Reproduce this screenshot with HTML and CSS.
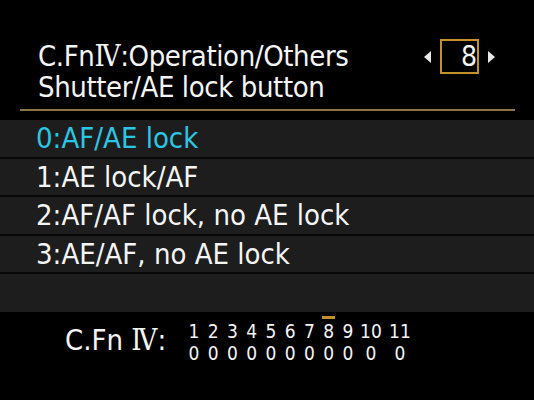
FILE: index.html
```html
<!DOCTYPE html>
<html>
  <head>
    <title>C.Fn IV: Operation/Others</title>
    <link rel="stylesheet" href="styles.css">
  </head>
  <body>
    <div id="screen">
      <div id="header">
        <div class="title_row">
          <p>C.Fn<span class="roman">Ⅳ</span>:Operation/Others</p>
          <div class="selector">
            <span class="arrow left"></span>
            <span class="num_box">8</span>
            <span class="arrow right"></span>
          </div>
        </div>
        <p>Shutter/AE lock button</p>
      </div>

      <div id="options">
        <div class="option selected">0:AF/AE lock</div>
        <div class="option">1:AE lock/AF</div>
        <div class="option">2:AF/AF lock, no AE lock</div>
        <div class="option">3:AE/AF, no AE lock</div>
        <div class="option"></div>
      </div>

      <div id="summary">
        <p class="label">C.Fn <span class="roman">Ⅳ</span>:</p>
        <div class="grid">
          <div class="col"><i></i><span>1</span><span>0</span></div>
          <div class="col"><i></i><span>2</span><span>0</span></div>
          <div class="col"><i></i><span>3</span><span>0</span></div>
          <div class="col"><i></i><span>4</span><span>0</span></div>
          <div class="col"><i></i><span>5</span><span>0</span></div>
          <div class="col"><i></i><span>6</span><span>0</span></div>
          <div class="col"><i></i><span>7</span><span>0</span></div>
          <div class="col current"><i></i><span>8</span><span>0</span></div>
          <div class="col"><i></i><span>9</span><span>0</span></div>
          <div class="col"><i></i><span>10</span><span>0</span></div>
          <div class="col"><i></i><span>11</span><span>0</span></div>
        </div>
      </div>
    </div>
  </body>
</html>
```

FILE: styles.css
```css
body {
  margin: 0;
  background: #000;
  color: #f4f4f4;
  font-family: "DejaVu Sans Condensed", "DejaVu Sans", sans-serif;
  font-stretch: condensed;
}

p { margin: 0; }

#screen {
  width: 534px;
  height: 400px;
  display: flex;
  flex-direction: column;
}

#header {
  margin: 0 19px 0 20px;
  padding: 41px 20px 6px 18px;
  border-bottom: 2px solid #8c7443;
  font-size: 29px;
  line-height: 31px;
  letter-spacing: -0.4px;
}

.title_row {
  height: 31px;
  display: flex;
  justify-content: space-between;
  align-items: center;
}

.roman { font-family: "DejaVu Serif Condensed", "DejaVu Serif", serif; }

.selector {
  display: flex;
  align-items: center;
  gap: 9px;
}

.num_box {
  width: 35px;
  height: 31px;
  border: 2px solid #c1912c;
  text-align: right;
  font-size: 28px;
  line-height: 31px;
  letter-spacing: 0;
}

.arrow {
  width: 0;
  height: 0;
  border-top: 6px solid transparent;
  border-bottom: 6px solid transparent;
}
.arrow.left { border-right: 7px solid #e8e8e8; }
.arrow.right { border-left: 7px solid #e8e8e8; }

#options {
  margin-top: 9px;
  background: #1d1d1d;
  font-size: 29px;
}

.option {
  height: 36.5px;
  line-height: 37px;
  padding-left: 36px;
  border-bottom: 2px solid #070707;
}
.option:last-child { height: 38px; border-bottom: none; }
.option.selected { color: #2cc6e4; }

#summary {
  display: flex;
  align-items: center;
  padding: 4px 0 0 65px;
  gap: 18px;
}

#summary .label {
  font-size: 29px;
  line-height: 31px;
}

.grid {
  display: grid;
  grid-template-columns: repeat(9, 19.25px) 27px 31px;
  font-size: 19px;
  line-height: 22px;
}

.col {
  display: flex;
  flex-direction: column;
  align-items: center;
}

.col > i {
  width: 13px;
  height: 3px;
  margin-bottom: 1px;
}
.col.current > i { background: #c1912c; }
```
